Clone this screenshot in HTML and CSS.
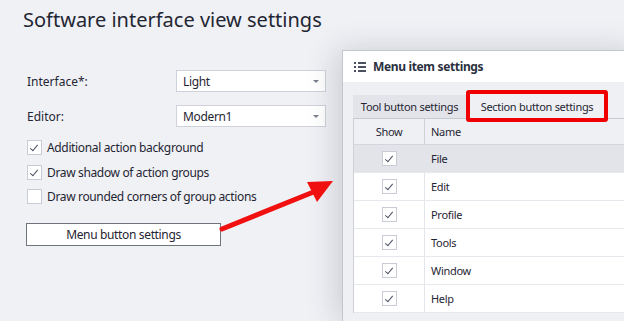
FILE: index.html
```html
<!DOCTYPE html>
<html>
<head>
<meta charset="utf-8">
<link rel="stylesheet" href="styles.css">
</head>
<body>
<div class="page">
  <h1 class="title">Software interface view settings</h1>
  <div class="form">
    <div class="field">
      <span class="label">Interface*:</span>
      <div class="select"><span>Light</span><span class="caret"></span></div>
    </div>
    <div class="field">
      <span class="label">Editor:</span>
      <div class="select"><span>Modern1</span><span class="caret"></span></div>
    </div>
    <div class="checks">
      <label class="check"><span class="box on"></span>Additional action background</label>
      <label class="check"><span class="box on"></span>Draw shadow of action groups</label>
      <label class="check"><span class="box"></span>Draw rounded corners of group actions</label>
    </div>
    <div class="btn">Menu button settings</div>
  </div>
</div>

<div class="panel">
  <div class="panel-head">
    <svg class="list-ico" width="12" height="10" viewBox="0 0 12 10">
      <rect x="0" y="0" width="2" height="2" fill="#4a5060"/>
      <rect x="4" y="0" width="8" height="2" fill="#4a5060"/>
      <rect x="0" y="4" width="2" height="2" fill="#4a5060"/>
      <rect x="4" y="4" width="8" height="2" fill="#4a5060"/>
      <rect x="0" y="8" width="2" height="2" fill="#4a5060"/>
      <rect x="4" y="8" width="8" height="2" fill="#4a5060"/>
    </svg>
    <span class="panel-title">Menu item settings</span>
  </div>
  <div class="panel-body">
    <div class="tabs">
      <div class="tab">Tool button settings</div>
      <div class="tab active">Section button settings</div>
    </div>
    <div class="grid">
      <div class="row head"><div class="c1">Show</div><div class="c2">Name</div></div>
      <div class="row sel"><div class="c1"><span class="box on"></span></div><div class="c2">File</div></div>
      <div class="row"><div class="c1"><span class="box on"></span></div><div class="c2">Edit</div></div>
      <div class="row"><div class="c1"><span class="box on"></span></div><div class="c2">Profile</div></div>
      <div class="row"><div class="c1"><span class="box on"></span></div><div class="c2">Tools</div></div>
      <div class="row"><div class="c1"><span class="box on"></span></div><div class="c2">Window</div></div>
      <div class="row"><div class="c1"><span class="box on"></span></div><div class="c2">Help</div></div>
    </div>
  </div>
</div>

<svg class="arrow" width="130" height="70" viewBox="0 0 130 70">
  <line x1="4" y1="60" x2="98" y2="22" stroke="#f01010" stroke-width="5" stroke-linecap="round"/>
  <polygon points="115,12 89,13 99,33" fill="#f01010"/>
</svg>
</body>
</html>
```

FILE: styles.css
```css
* { box-sizing: border-box; }
html, body { margin: 0; padding: 0; }
body {
  width: 624px;
  height: 321px;
  overflow: hidden;
  position: relative;
  background: #f0f1f5;
  font-family: "Noto Sans", "DejaVu Sans", sans-serif;
  font-size: 12px;
  letter-spacing: -0.35px;
  color: #1f2633;
}
.page { padding: 6px 0 0 23px; }
.title {
  margin: 0;
  font-weight: normal;
  font-size: 20px;
  letter-spacing: 0;
  line-height: 28px;
  color: #1f2633;
}
.form { padding: 36px 0 0 4px; width: 320px; }
.field { display: flex; align-items: center; height: 22px; margin-bottom: 13px; }
.label { width: 149px; flex: none; letter-spacing: 0; }
.select {
  width: 150px; height: 22px;
  flex: none;
  background: #fff;
  border: 1px solid #cfd2da;
  display: flex; align-items: center; justify-content: space-between;
  padding: 0 6px 0 6px;
}
.caret {
  width: 0; height: 0;
  border-left: 3px solid transparent;
  border-right: 3px solid transparent;
  border-top: 3px solid #7a7f8a;
}
.checks { display: flex; flex-direction: column; gap: 9.5px; margin-top: 2px; }
.check { display: flex; align-items: center; height: 15px; gap: 5px; }
.box {
  width: 15px; height: 15px;
  background: #fff;
  border: 1px solid #c9ccd4;
  position: relative;
  flex: none;
}
.box.on::after {
  content: "";
  position: absolute;
  left: 4px; top: 2px;
  width: 3px; height: 7px;
  border-right: 1px solid #4a5060;
  border-bottom: 1px solid #4a5060;
  transform: rotate(40deg);
}
.btn {
  margin-top: 19px;
  width: 195px; height: 23px;
  margin-left: -1px;
  background: #fff;
  border: 1px solid #6f737c;
  display: flex; align-items: center; justify-content: center;
}

.panel {
  position: absolute;
  left: 342px; top: 50px;
  width: 300px; height: 271px;
  overflow: hidden;
  background: #eff0f4;
  border: 1px solid #c4c6cd;
  border-bottom: none;
  box-shadow: -6px 0 28px rgba(40,45,60,0.18);
}
.panel-head {
  height: 31px;
  background: #fff;
  display: flex; align-items: center;
  padding-left: 11px; gap: 7px;
}
.panel-title { font-weight: bold; font-size: 12px; color: #2a3040; }
.panel-body { padding: 9px 0 0 10px; font-size: 11px; letter-spacing: -0.3px; }
.tabs { display: flex; height: 28px; align-items: flex-end; border-bottom: 1px solid #c8cad1; }
.tab {
  height: 23px;
  white-space: nowrap;
  display: flex; align-items: center; justify-content: center;
  background: #e3e4e9;
  width: 113px; flex: none;
}
.tab.active {
  height: 32px;
  width: 142px;
  background: #eff0f4;
  border: 4px solid #f00000;
  border-radius: 3px;
  margin-bottom: -4px;
  position: relative;
  z-index: 2;
}
.grid { background: #fff; border-left: 1px solid #cdd0d7; }
.row { display: flex; height: 28px; border-bottom: 1px solid #e6e8ee; }
.row.head { height: 26px; background: #eff0f4; border-bottom: 1px solid #d4d6dc; }
.row.sel { background: #e3e4e9; }
.c1 { width: 71px; display: flex; align-items: center; justify-content: center; border-right: 1px solid #e3e5ea; }
.row.head .c1 { border-right-color: #cdd0d7; }
.c2 { padding-left: 6px; display: flex; align-items: center; }

.arrow { position: absolute; left: 218px; top: 169px; }
```
